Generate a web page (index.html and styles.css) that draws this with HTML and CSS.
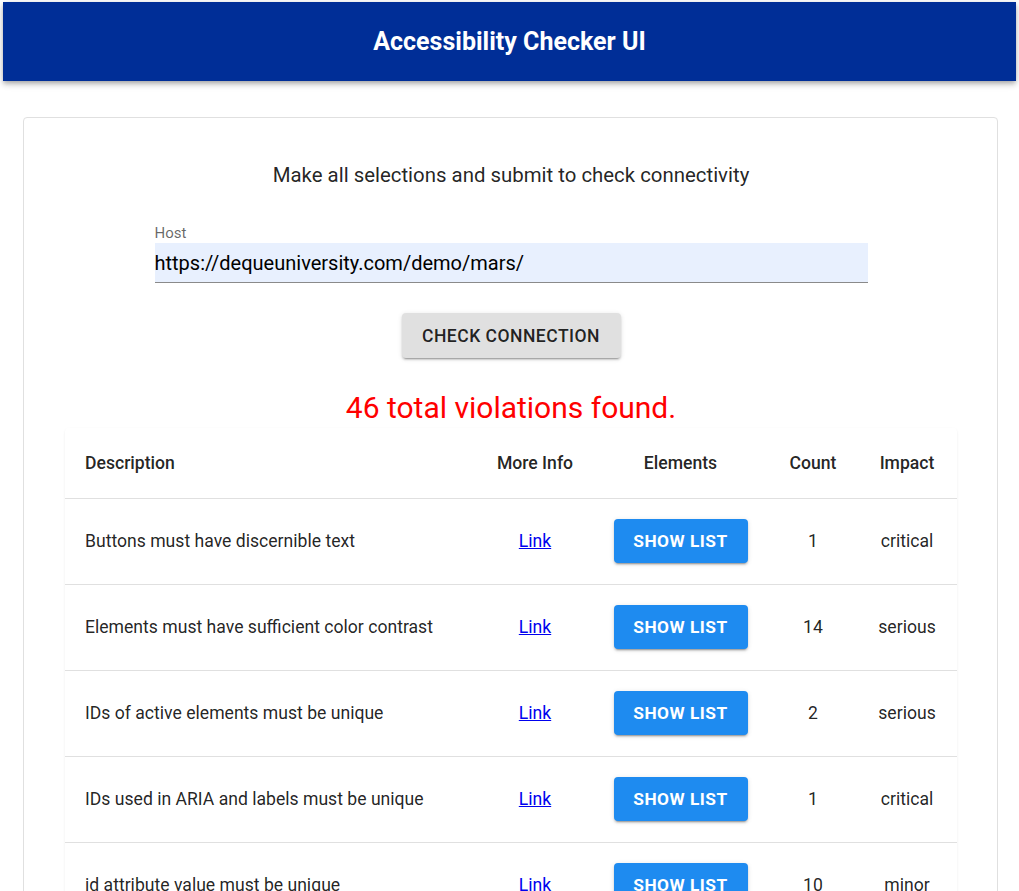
FILE: index.html
```html
<!DOCTYPE html>
<html lang="en">
<head>
<meta charset="utf-8">
<title>Accessibility Checker UI</title>
<link rel="stylesheet" href="styles.css">
</head>
<body>
<header class="appbar"><h1 class="appbar-title">Accessibility Checker UI</h1></header>
<main class="card">
  <p class="intro">Make all selections and submit to check connectivity</p>
  <div class="field">
    <label class="field-label" for="host">Host</label>
    <input class="field-input" id="host" type="text" value="https://dequeuniversity.com/demo/mars/">
  </div>
  <div class="actions"><button class="btn-grey">Check Connection</button></div>
  <p class="result">46 total violations found.</p>
  <div class="table-paper">
    <table class="vtable">
      <colgroup>
        <col class="c-desc"><col class="c-info"><col class="c-el"><col class="c-count"><col class="c-impact">
      </colgroup>
      <thead>
        <tr><th class="left">Description</th><th>More Info</th><th>Elements</th><th>Count</th><th class="last">Impact</th></tr>
      </thead>
      <tbody>
        <tr><td class="left">Buttons must have discernible text</td><td><a href="#">Link</a></td><td><button class="btn-blue">Show List</button></td><td>1</td><td class="last">critical</td></tr>
        <tr><td class="left">Elements must have sufficient color contrast</td><td><a href="#">Link</a></td><td><button class="btn-blue">Show List</button></td><td>14</td><td class="last">serious</td></tr>
        <tr><td class="left">IDs of active elements must be unique</td><td><a href="#">Link</a></td><td><button class="btn-blue">Show List</button></td><td>2</td><td class="last">serious</td></tr>
        <tr><td class="left">IDs used in ARIA and labels must be unique</td><td><a href="#">Link</a></td><td><button class="btn-blue">Show List</button></td><td>1</td><td class="last">critical</td></tr>
        <tr><td class="left">id attribute value must be unique</td><td><a href="#">Link</a></td><td><button class="btn-blue">Show List</button></td><td>10</td><td class="last">minor</td></tr>
      </tbody>
    </table>
  </div>
</main>
</body>
</html>
```
FILE: styles.css
```css
* { box-sizing: border-box; }
html, body { margin: 0; padding: 0; }
body {
  font-family: Roboto, "Liberation Sans", Arial, sans-serif;
  color: rgba(0,0,0,0.87);
  background: #fff;
  padding: 2px 3px 0 3px;
}
.appbar {
  height: 79px;
  background: #002e97;
  display: flex;
  align-items: center;
  justify-content: center;
  box-shadow: 0 2px 4px -1px rgba(0,0,0,0.2), 0 4px 5px 0 rgba(0,0,0,0.14), 0 1px 10px 0 rgba(0,0,0,0.12);
}
.appbar-title {
  margin: 0;
  color: #fff;
  font-size: 25px;
  font-weight: 700;
}
.card {
  margin: 36px 18px 0 20px;
  border: 1px solid #e0e0e0;
  border-radius: 4px;
  padding: 45px 40px 0 41px;
  min-height: 800px;
}
.intro {
  margin: 0;
  text-align: center;
  font-size: 20.4px;
  line-height: 24px;
  color: rgba(0,0,0,0.87);
}
.field {
  width: 713px;
  margin: 38px auto 0;
  display: flex;
  flex-direction: column;
}
.field-label {
  font-size: 15px;
  line-height: 16px;
  color: rgba(0,0,0,0.6);
  margin-bottom: 2px;
}
.field-input {
  height: 40px;
  border: 0;
  border-bottom: 1px solid #8a8a8a;
  background: #e8f0fe;
  font-family: inherit;
  font-size: 20px;
  color: #000;
  padding: 0;
  outline: none;
}
.actions {
  display: flex;
  justify-content: center;
  margin-top: 30px;
}
.btn-grey {
  width: 219px;
  height: 45px;
  border: 0;
  border-radius: 4px;
  background: #e0e0e0;
  font-family: inherit;
  font-size: 17.5px;
  font-weight: 500;
  letter-spacing: 0.5px;
  text-transform: uppercase;
  color: rgba(0,0,0,0.87);
  box-shadow: 0 3px 1px -2px rgba(0,0,0,0.2), 0 2px 2px 0 rgba(0,0,0,0.14), 0 1px 5px 0 rgba(0,0,0,0.12);
}
.result {
  margin: 34px 0 0;
  text-align: center;
  color: #ff0000;
  font-size: 30px;
  line-height: 32px;
}
.table-paper {
  margin-top: 4px;
  border-radius: 4px;
  box-shadow: 0 2px 1px -1px rgba(0,0,0,0.08), 0 1px 1px 0 rgba(0,0,0,0.06), 0 1px 3px 0 rgba(0,0,0,0.06);
  overflow: hidden;
}
.vtable {
  width: 100%;
  border-collapse: collapse;
  table-layout: fixed;
}
.c-desc { width: 407px; }
.c-info { width: 126px; }
.c-el { width: 165px; }
.c-count { width: 100px; }
.c-impact { width: 94px; }
.vtable th, .vtable td {
  text-align: center;
  font-size: 17.6px;
  padding: 0 8px;
  border-bottom: 1px solid #e0e0e0;
  white-space: nowrap;
}
.vtable th {
  height: 70px;
  font-weight: 500;
}
.vtable td { height: 86px; }
.vtable .left { text-align: left; padding-left: 20px; }
.vtable .last { padding-right: 6px; padding-left: 0; }
.vtable a { color: #0000ee; text-decoration: underline; }
.btn-blue {
  width: 134px;
  height: 44px;
  border: 0;
  border-radius: 4px;
  background: #1e8bf0;
  color: #fff;
  font-family: inherit;
  font-size: 17.3px;
  font-weight: 700;
  letter-spacing: 0.5px;
  text-transform: uppercase;
  box-shadow: 0 3px 1px -2px rgba(0,0,0,0.2), 0 2px 2px 0 rgba(0,0,0,0.14), 0 1px 5px 0 rgba(0,0,0,0.12);
}
```
